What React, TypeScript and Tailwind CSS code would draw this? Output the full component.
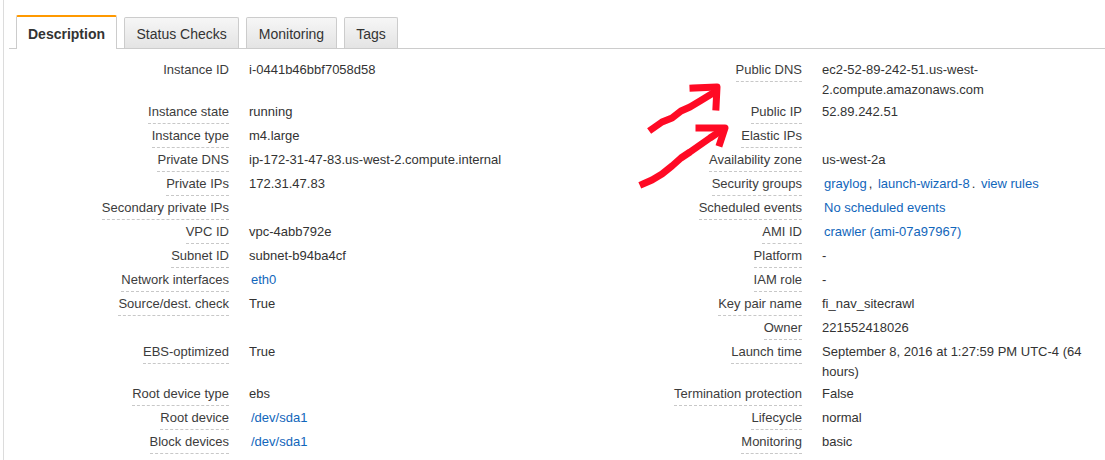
import React from 'react';

type Cell = React.ReactNode;

interface Row {
  l?: string;
  lv?: Cell;
  r?: string;
  rv?: Cell;
  noLine?: boolean;
}

function Link({ children }: { children: React.ReactNode }) {
  return <span className="px-[2px] text-[#1166bb]">{children}</span>;
}

const rows: Row[] = [
  {
    l: 'Instance ID',
    lv: 'i-0441b46bbf7058d58',
    noLine: true,
    r: 'Public DNS',
    rv: (
      <>
        ec2-52-89-242-51.us-west-
        <br />
        2.compute.amazonaws.com
      </>
    ),
  },
  { l: 'Instance state', lv: 'running', r: 'Public IP', rv: '52.89.242.51' },
  { l: 'Instance type', lv: 'm4.large', r: 'Elastic IPs', rv: '' },
  { l: 'Private DNS', lv: 'ip-172-31-47-83.us-west-2.compute.internal', r: 'Availability zone', rv: 'us-west-2a' },
  {
    l: 'Private IPs',
    lv: '172.31.47.83',
    r: 'Security groups',
    rv: (
      <>
        <Link>graylog</Link>, <Link>launch-wizard-8</Link>. <Link>view rules</Link>
      </>
    ),
  },
  { l: 'Secondary private IPs', lv: '', r: 'Scheduled events', rv: <Link>No scheduled events</Link> },
  { l: 'VPC ID', lv: 'vpc-4abb792e', r: 'AMI ID', rv: <Link>crawler (ami-07a97967)</Link> },
  { l: 'Subnet ID', lv: 'subnet-b94ba4cf', r: 'Platform', rv: '-' },
  { l: 'Network interfaces', lv: <Link>eth0</Link>, r: 'IAM role', rv: '-' },
  { l: 'Source/dest. check', lv: 'True', r: 'Key pair name', rv: 'fi_nav_sitecrawl' },
  { r: 'Owner', rv: '221552418026' },
  {
    l: 'EBS-optimized',
    lv: 'True',
    r: 'Launch time',
    rv: (
      <>
        September 8, 2016 at 1:27:59 PM UTC-4 (64
        <br />
        hours)
      </>
    ),
  },
  { l: 'Root device type', lv: 'ebs', r: 'Termination protection', rv: 'False' },
  { l: 'Root device', lv: <Link>/dev/sda1</Link>, r: 'Lifecycle', rv: 'normal' },
  { l: 'Block devices', lv: <Link>/dev/sda1</Link>, r: 'Monitoring', rv: 'basic' },
];

function Label({ text, width, noLine }: { text?: string; width: string; noLine?: boolean }) {
  return (
    <div className={`flex shrink-0 justify-end items-start pt-[3px] ${width}`}>
      {text && (
        <span
          className={`block leading-[18px] pb-[2px] text-[#3c3c3c] border-b border-dashed ${
            noLine ? 'border-transparent' : 'border-[#c8c8c8]'
          }`}
        >
          {text}
        </span>
      )}
    </div>
  );
}

function Tab({ label, active }: { label: string; active?: boolean }) {
  if (active) {
    return (
      <div className="h-[34px] -mb-px mr-[7px] px-[11px] pt-[2px] flex items-center bg-white border border-b-0 border-[#ccc] border-t-2 border-t-[#ff9900] rounded-t-[2px] font-bold text-[14px] text-[#333]">
        {label}
      </div>
    );
  }
  return (
    <div className="h-[31px] mr-[7px] px-[11.5px] pt-[2px] flex items-center bg-gradient-to-b from-[#f6f6f6] to-[#e4e4e4] border border-b-0 border-[#ccc] rounded-t-[2px] text-[14px] text-[#333]">
      {label}
    </div>
  );
}

export default function App() {
  return (
    <div
      className="relative w-[1105px] h-[460px] overflow-hidden bg-white"
      style={{ fontFamily: '"Liberation Sans", Arial, Helvetica, sans-serif' }}
    >
      <div className="ml-[3px] h-full border-l border-[#dcdcdc]">
        {/* tab strip */}
        <div className="ml-[5px] pl-[7px] h-[49px] flex items-end border-b border-[#cccccc]">
          <Tab label="Description" active />
          <Tab label="Status Checks" />
          <Tab label="Monitoring" />
          <Tab label="Tags" />
        </div>

        {/* description table */}
        <div className="pt-[9px] text-[13px]">
          {rows.map((row, i) => (
            <div key={i} className="flex items-start min-h-[24px]">
              <Label text={row.l} width="w-[225px]" noLine={row.noLine} />
              <div className="ml-5 w-[353px] shrink-0 pt-[2px] leading-[20px] text-[#333]">{row.lv}</div>
              <Label text={row.r} width="w-[200px]" />
              <div className="ml-5 w-[278px] shrink-0 pt-[2px] leading-[20px] text-[#333]">{row.rv}</div>
            </div>
          ))}
        </div>
      </div>

      {/* red annotation arrows */}
      <svg
        className="absolute left-0 top-0 pointer-events-none"
        width="1105"
        height="460"
        viewBox="0 0 1105 460"
        fill="none"
        stroke="#ff0a24"
        strokeWidth="7"
        strokeLinecap="square"
        strokeLinejoin="round"
      >
        <polyline points="652,129 662,122 672,118 681,111 690,107 700,101 713,93" />
        <polyline points="693,88 717,87 716,107" />
        <polyline points="643,184 652,180 662,174 672,166 681,158 690,152 700,145 710,138 719,132" />
        <polyline points="699,128 725,128 720,143" />
      </svg>
    </div>
  );
}
